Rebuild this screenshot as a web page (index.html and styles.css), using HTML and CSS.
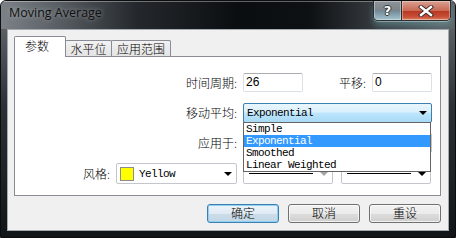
FILE: index.html
```html
<!DOCTYPE html>
<html>
<head>
  <title>Moving Average</title>
  <link rel="stylesheet" href="styles.css">
</head>
<body>
  <div class="window">
    <div class="titlebar">
      <span class="title">Moving Average</span>
      <div class="caption">
        <div class="cap help">?</div>
        <div class="cap close">
          <svg width="16" height="12" viewBox="0 0 16 12">
            <path d="M3 2 L13 10 M13 2 L3 10" stroke="#3a2a28" stroke-width="4.2" stroke-linecap="square"/>
            <path d="M3 2 L13 10 M13 2 L3 10" stroke="#fff" stroke-width="2.4" stroke-linecap="square"/>
          </svg>
        </div>
      </div>
    </div>

    <div class="client">
      <div class="tabs">
        <div class="tab active">参数</div>
        <div class="tab t2">水平位</div>
        <div class="tab t3">应用范围</div>
      </div>

      <div class="panel">
        <div class="row r1">
          <span class="label">时间周期:</span>
          <div class="edit">26</div>
          <span class="label small">平移:</span>
          <div class="edit">0</div>
        </div>

        <div class="row r2">
          <span class="label">移动平均:</span>
          <div class="combo wide focus">
            <span class="mono">Exponential</span>
            <i class="arrow"></i>
            <ul class="list">
              <li>Simple</li>
              <li class="sel">Exponential</li>
              <li>Smoothed</li>
              <li>Linear Weighted</li>
            </ul>
          </div>
        </div>

        <!-- the applied-price box sits under the open list -->
        <div class="row r3">
          <span class="label">应用于:</span>
          <div class="combo wide">
            <i class="arrow"></i>
          </div>
        </div>

        <div class="row r4">
          <span class="label short">风格:</span>
          <div class="combo color">
            <span class="swatch"></span>
            <span class="mono">Yellow</span>
            <i class="arrow"></i>
          </div>
          <div class="combo linebox c2">
            <span class="line"></span>
            <i class="arrow gray"></i>
          </div>
          <div class="combo linebox c3">
            <span class="line"></span>
            <i class="arrow"></i>
          </div>
        </div>
      </div>

      <div class="buttons">
        <div class="btn default">确定</div>
        <div class="btn">取消</div>
        <div class="btn">重设</div>
      </div>
    </div>
  </div>
</body>
</html>
```

FILE: styles.css
```css
body {
  margin: 0;
  font-family: "Noto Sans CJK SC", sans-serif;
  font-size: 12px;
  color: #000;
}

.window {
  width: 456px;
  height: 238px;
  box-sizing: border-box;
  border: 1px solid #0b0d0f;
  border-radius: 6px 6px 0 0;
  background: linear-gradient(#6a7074, #2c3034 45%, #121518);
  overflow: hidden;
}

/* title bar */
.titlebar {
  height: 28px;
  display: flex;
  align-items: flex-start;
  background: linear-gradient(to right, #7b8186 0%, #5a6065 12%, #24282c 30%, #0b0e11 52%, #0e1114 68%, #34393d 82%, #5f6569 100%);
  box-shadow: inset 0 1px 0 rgba(255,255,255,0.35);
}
.title {
  padding: 4px 0 0 8px;
  font-family: "Open Sans", sans-serif;
  font-size: 12.5px;
  line-height: 16px;
  color: #111;
  text-shadow: 0 0 5px rgba(220,225,230,0.6);
}
.caption {
  margin-left: auto;
  margin-right: 4px;
  display: flex;
  height: 19px;
  border: 1px solid #2a2f33;
  border-top: none;
  border-radius: 0 0 5px 5px;
  overflow: hidden;
  box-shadow: 0 1px 0 rgba(255,255,255,0.35), 0 5px 6px rgba(120,200,210,0.35);
}
.cap {
  display: flex;
  align-items: center;
  justify-content: center;
  box-shadow: inset 0 0 0 1px rgba(255,255,255,0.35);
}
.help {
  width: 27px;
  background: linear-gradient(#8d9499, #7c858b 50%, #6f8995 51%, #a5c3cf);
  color: #fff;
  font-family: "DejaVu Sans", sans-serif;
  font-weight: bold;
  font-size: 13px;
  text-shadow: 1px 0 0 #333, -1px 0 0 #333, 0 1px 0 #333, 0 -1px 0 #333;
  border-right: 1px solid #2a2f33;
}
.close {
  width: 48px;
  background: linear-gradient(#d9a092, #c86a55 50%, #b8361f 51%, #c9513a 85%, #e08a68);
}

/* client area */
.client {
  margin: 0 6px;
  height: 202px;
  box-sizing: border-box;
  border: 1px solid #a4abb0;
  background: #f0f0f0;
  padding: 6px 7px 0 6px;
}

.tabs {
  display: flex;
  align-items: flex-end;
  height: 20px;
  position: relative;
  z-index: 1;
}
.tab {
  box-sizing: border-box;
  border: 1px solid #898c95;
  border-bottom: none;
  text-align: center;
  font-weight: 300;
}
.tab.active {
  width: 52px;
  height: 21px;
  margin-bottom: -1px;
  background: #fff;
  line-height: 18px;
  padding-right: 6px;
  border-radius: 2px 2px 0 0;
}
.tab.t2,
.tab.t3 {
  height: 16px;
  line-height: 15px;
  background: linear-gradient(#f2f2f2, #e4e4e4);
  margin-left: -1px;
  border-radius: 2px 2px 0 0;
}
.tab.t2 { width: 47px; }
.tab.t3 { width: 60px; }

.panel {
  height: 140px;
  box-sizing: border-box;
  border: 1px solid #898c95;
  background: #fff;
  padding-top: 16px;
}

.row {
  display: flex;
  align-items: center;
}
.r1 { height: 19px; }
.r2 { height: 20px; margin-top: 11px; position: relative; z-index: 2; }
.r3 { height: 20px; margin-top: 10px; }
.r4 { height: 21px; margin-top: 10px; }

.label {
  width: 228px;
  box-sizing: border-box;
  padding-right: 6px;
  text-align: right;
  line-height: 14px;
  font-weight: 300;
}
.label.small { width: 69px; }
.label.short { width: 101px; }

.edit {
  width: 60px;
  height: 19px;
  box-sizing: border-box;
  border: 1px solid #dbdfe6;
  border-top-color: #abadb3;
  border-radius: 2px;
  padding-left: 2px;
  font-family: "Liberation Sans", sans-serif;
  font-size: 12px;
  line-height: 17px;
}

.combo {
  box-sizing: border-box;
  height: 100%;
  display: flex;
  align-items: center;
  border: 1px solid #c3c6cc;
  border-radius: 2px;
  background: #fff;
  padding-left: 3px;
  position: relative;
}
.combo.wide { width: 189px; }
.combo.focus {
  border-color: #3c7fb1;
  background: linear-gradient(#eaf6fd, #d9f0fc 45%, #bee6fd 50%, #a7d9f5);
}
.combo.color { width: 121px; }
.combo.c2 { width: 90px; margin-left: 6px; }
.combo.c3 { width: 90px; margin-left: 8px; }

.mono {
  font-family: "Liberation Mono", monospace;
  font-size: 11px;
  letter-spacing: -0.6px;
  line-height: 12px;
}
.arrow {
  margin-left: auto;
  margin-right: 4px;
  width: 0;
  height: 0;
  border-left: 4px solid transparent;
  border-right: 4px solid transparent;
  border-top: 4px solid #000;
}
.arrow.gray { border-top-color: #a5a5a5; }

.swatch {
  width: 14px;
  height: 14px;
  box-sizing: border-box;
  border: 1px solid #8c8c8c;
  background: #ffff00;
  margin-right: 5px;
}
.line {
  width: 64px;
  height: 1px;
  margin-left: 2px;
  background: #000;
}

.list {
  position: absolute;
  left: -1px;
  top: 18px;
  width: 188px;
  box-sizing: border-box;
  margin: 0;
  padding: 0;
  list-style: none;
  border: 1px solid #646464;
  background: #fff;
  font-family: "Liberation Mono", monospace;
  font-size: 11px;
  letter-spacing: -0.6px;
}
.list li {
  height: 12px;
  line-height: 12px;
  padding-left: 2px;
}
.list li.sel {
  background: #3399ff;
  color: #fff;
}

/* dialog buttons */
.buttons {
  display: flex;
  justify-content: flex-end;
  gap: 9px;
  margin-top: 8px;
}
.btn {
  width: 72px;
  height: 19px;
  box-sizing: border-box;
  border: 1px solid #707070;
  border-radius: 3px;
  background: linear-gradient(#f2f2f2, #ebebeb 50%, #dddddd 51%, #cfcfcf);
  box-shadow: inset 0 0 0 1px rgba(255,255,255,0.7);
  text-align: center;
  line-height: 16px;
  font-weight: 300;
}
.btn.default {
  border-color: #3c7fb1;
  background: linear-gradient(#edf5fb, #dfeaf3 50%, #cddde9 51%, #c2d6e5);
  box-shadow: inset 0 0 0 1px #8fd0f3;
}
```
